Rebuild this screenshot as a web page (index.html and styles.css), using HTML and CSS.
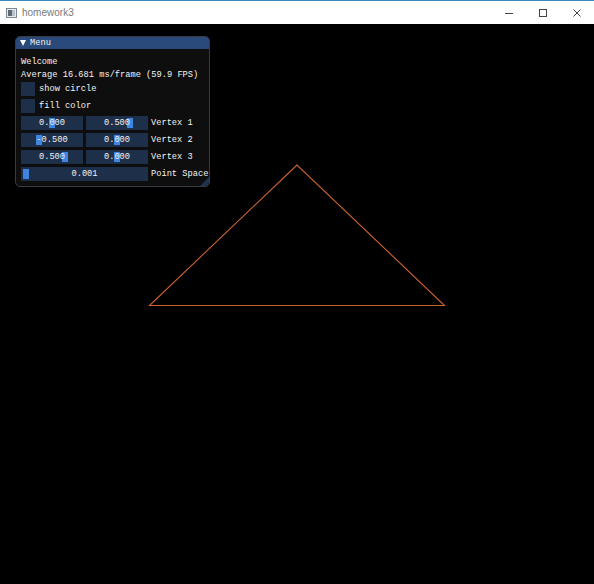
FILE: index.html
```
<!DOCTYPE html>
<html>
<head>
<meta charset="utf-8">
<link rel="stylesheet" href="styles.css">
</head>
<body>
<div class="app">
  <div class="titlebar">
    <svg class="app-icon" width="11" height="10" viewBox="0 0 11 10">
      <rect x="0.5" y="0.5" width="10" height="9" fill="#e8ecef" stroke="#7d8790"/>
      <rect x="2" y="2" width="4" height="6" fill="#5d6a76"/>
      <rect x="6" y="2" width="3" height="6" fill="#b8c2cb"/>
    </svg>
    <span class="app-title">homework3</span>
    <div class="controls">
      <div class="ctl"><svg width="10" height="10" viewBox="0 0 10 10"><line x1="1" y1="5.5" x2="9" y2="5.5" stroke="#444" stroke-width="1"/></svg></div>
      <div class="ctl"><svg width="10" height="10" viewBox="0 0 10 10"><rect x="1.5" y="1.5" width="7" height="7" fill="none" stroke="#444" stroke-width="1"/></svg></div>
      <div class="ctl"><svg width="10" height="10" viewBox="0 0 10 10"><path d="M1.5 1.5 L8.5 8.5 M8.5 1.5 L1.5 8.5" stroke="#444" stroke-width="1"/></svg></div>
    </div>
  </div>
  <div class="viewport">
    <svg class="scene" width="594" height="560" viewBox="0 0 594 560">
      <polygon points="297,141 149.5,281.5 444.5,281.5" fill="none" stroke="#c9622e" stroke-width="1.1"/>
    </svg>
    <div class="imgui">
      <div class="imgui-title"><span class="arrow"></span><span>Menu</span></div>
      <div class="imgui-body">
        <div class="line">Welcome</div>
        <div class="line">Average 16.681 ms/frame (59.9 FPS)</div>
        <div class="check-row"><span class="checkbox"></span><span>show circle</span></div>
        <div class="check-row gap3"><span class="checkbox"></span><span>fill color</span></div>
        <div class="slider-row gap3">
          <div class="frame"><span class="grab" style="left:28px"></span><span class="val">0.000</span></div>
          <div class="frame"><span class="grab" style="left:41px"></span><span class="val">0.500</span></div>
          <span class="label">Vertex 1</span>
        </div>
        <div class="slider-row gap3">
          <div class="frame"><span class="grab" style="left:15px"></span><span class="val">-0.500</span></div>
          <div class="frame"><span class="grab" style="left:28px"></span><span class="val">0.000</span></div>
          <span class="label">Vertex 2</span>
        </div>
        <div class="slider-row gap3">
          <div class="frame"><span class="grab" style="left:41px"></span><span class="val">0.500</span></div>
          <div class="frame"><span class="grab" style="left:28px"></span><span class="val">0.000</span></div>
          <span class="label">Vertex 3</span>
        </div>
        <div class="slider-row gap3">
          <div class="frame wide"><span class="grab" style="left:2px"></span><span class="val">0.001</span></div>
          <span class="label">Point Space</span>
        </div>
      </div>
      <span class="grip"></span>
    </div>
  </div>
</div>
</body>
</html>
```
FILE: styles.css
```
html, body {
  margin: 0;
  padding: 0;
  background: #000;
}
.app {
  width: 594px;
  height: 584px;
  overflow: hidden;
  background: #000;
}
.titlebar {
  height: 23px;
  border-top: 1px solid #3c8cba;
  background: #fff;
  display: flex;
  align-items: center;
  padding-left: 6px;
  font-family: "Segoe UI", "Liberation Sans", sans-serif;
  font-size: 10px;
  color: #7a7a7a;
}
.app-icon {
  display: block;
  margin-right: 5px;
}
.app-title {
  flex: 1;
}
.controls {
  display: flex;
  height: 23px;
}
.ctl {
  width: 34px;
  display: flex;
  align-items: center;
  justify-content: center;
}
.ctl svg { display: block; }
.viewport {
  position: relative;
  width: 594px;
  height: 560px;
}
.scene {
  display: block;
}
.imgui {
  position: absolute;
  left: 15px;
  top: 12px;
  width: 195px;
  height: 151px;
  box-sizing: border-box;
  border: 1px solid #393944;
  border-radius: 5px;
  background: #0e0e0e;
  overflow: hidden;
  font-family: "Liberation Mono", "DejaVu Sans Mono", monospace;
  font-size: 8.7px;
  color: #f4f4f4;
}
.imgui-title {
  height: 12px;
  background: #294a7a;
  display: flex;
  align-items: center;
  gap: 4px;
  padding-left: 4px;
  line-height: 12px;
}
.arrow {
  width: 0;
  height: 0;
  border-left: 3px solid transparent;
  border-right: 3px solid transparent;
  border-top: 6px solid #fff;
}
.imgui-body {
  padding: 7px 5px 0 5px;
}
.line {
  height: 13px;
  line-height: 13px;
  white-space: nowrap;
}
.check-row {
  display: flex;
  align-items: center;
  gap: 4px;
  height: 14px;
  line-height: 14px;
}
.checkbox {
  flex-shrink: 0;
  width: 14px;
  height: 14px;
  background: #1d2f49;
}
.gap3 { margin-top: 3px; }
.slider-row {
  display: flex;
  align-items: center;
  gap: 3px;
  height: 14px;
  white-space: nowrap;
}
.frame {
  position: relative;
  flex-shrink: 0;
  width: 62px;
  height: 14px;
  background: #1d2f49;
  display: flex;
  align-items: center;
  justify-content: center;
  line-height: 14px;
}
.frame.wide {
  width: 127px;
}
.grab {
  position: absolute;
  top: 2px;
  width: 6px;
  height: 10px;
  background: #3d85e0;
}
.val {
  position: relative;
}
.label {
  line-height: 14px;
}
.grip {
  position: absolute;
  right: 0;
  bottom: 0;
  width: 0;
  height: 0;
  border-left: 9px solid transparent;
  border-bottom: 9px solid #1c3350;
}
```
